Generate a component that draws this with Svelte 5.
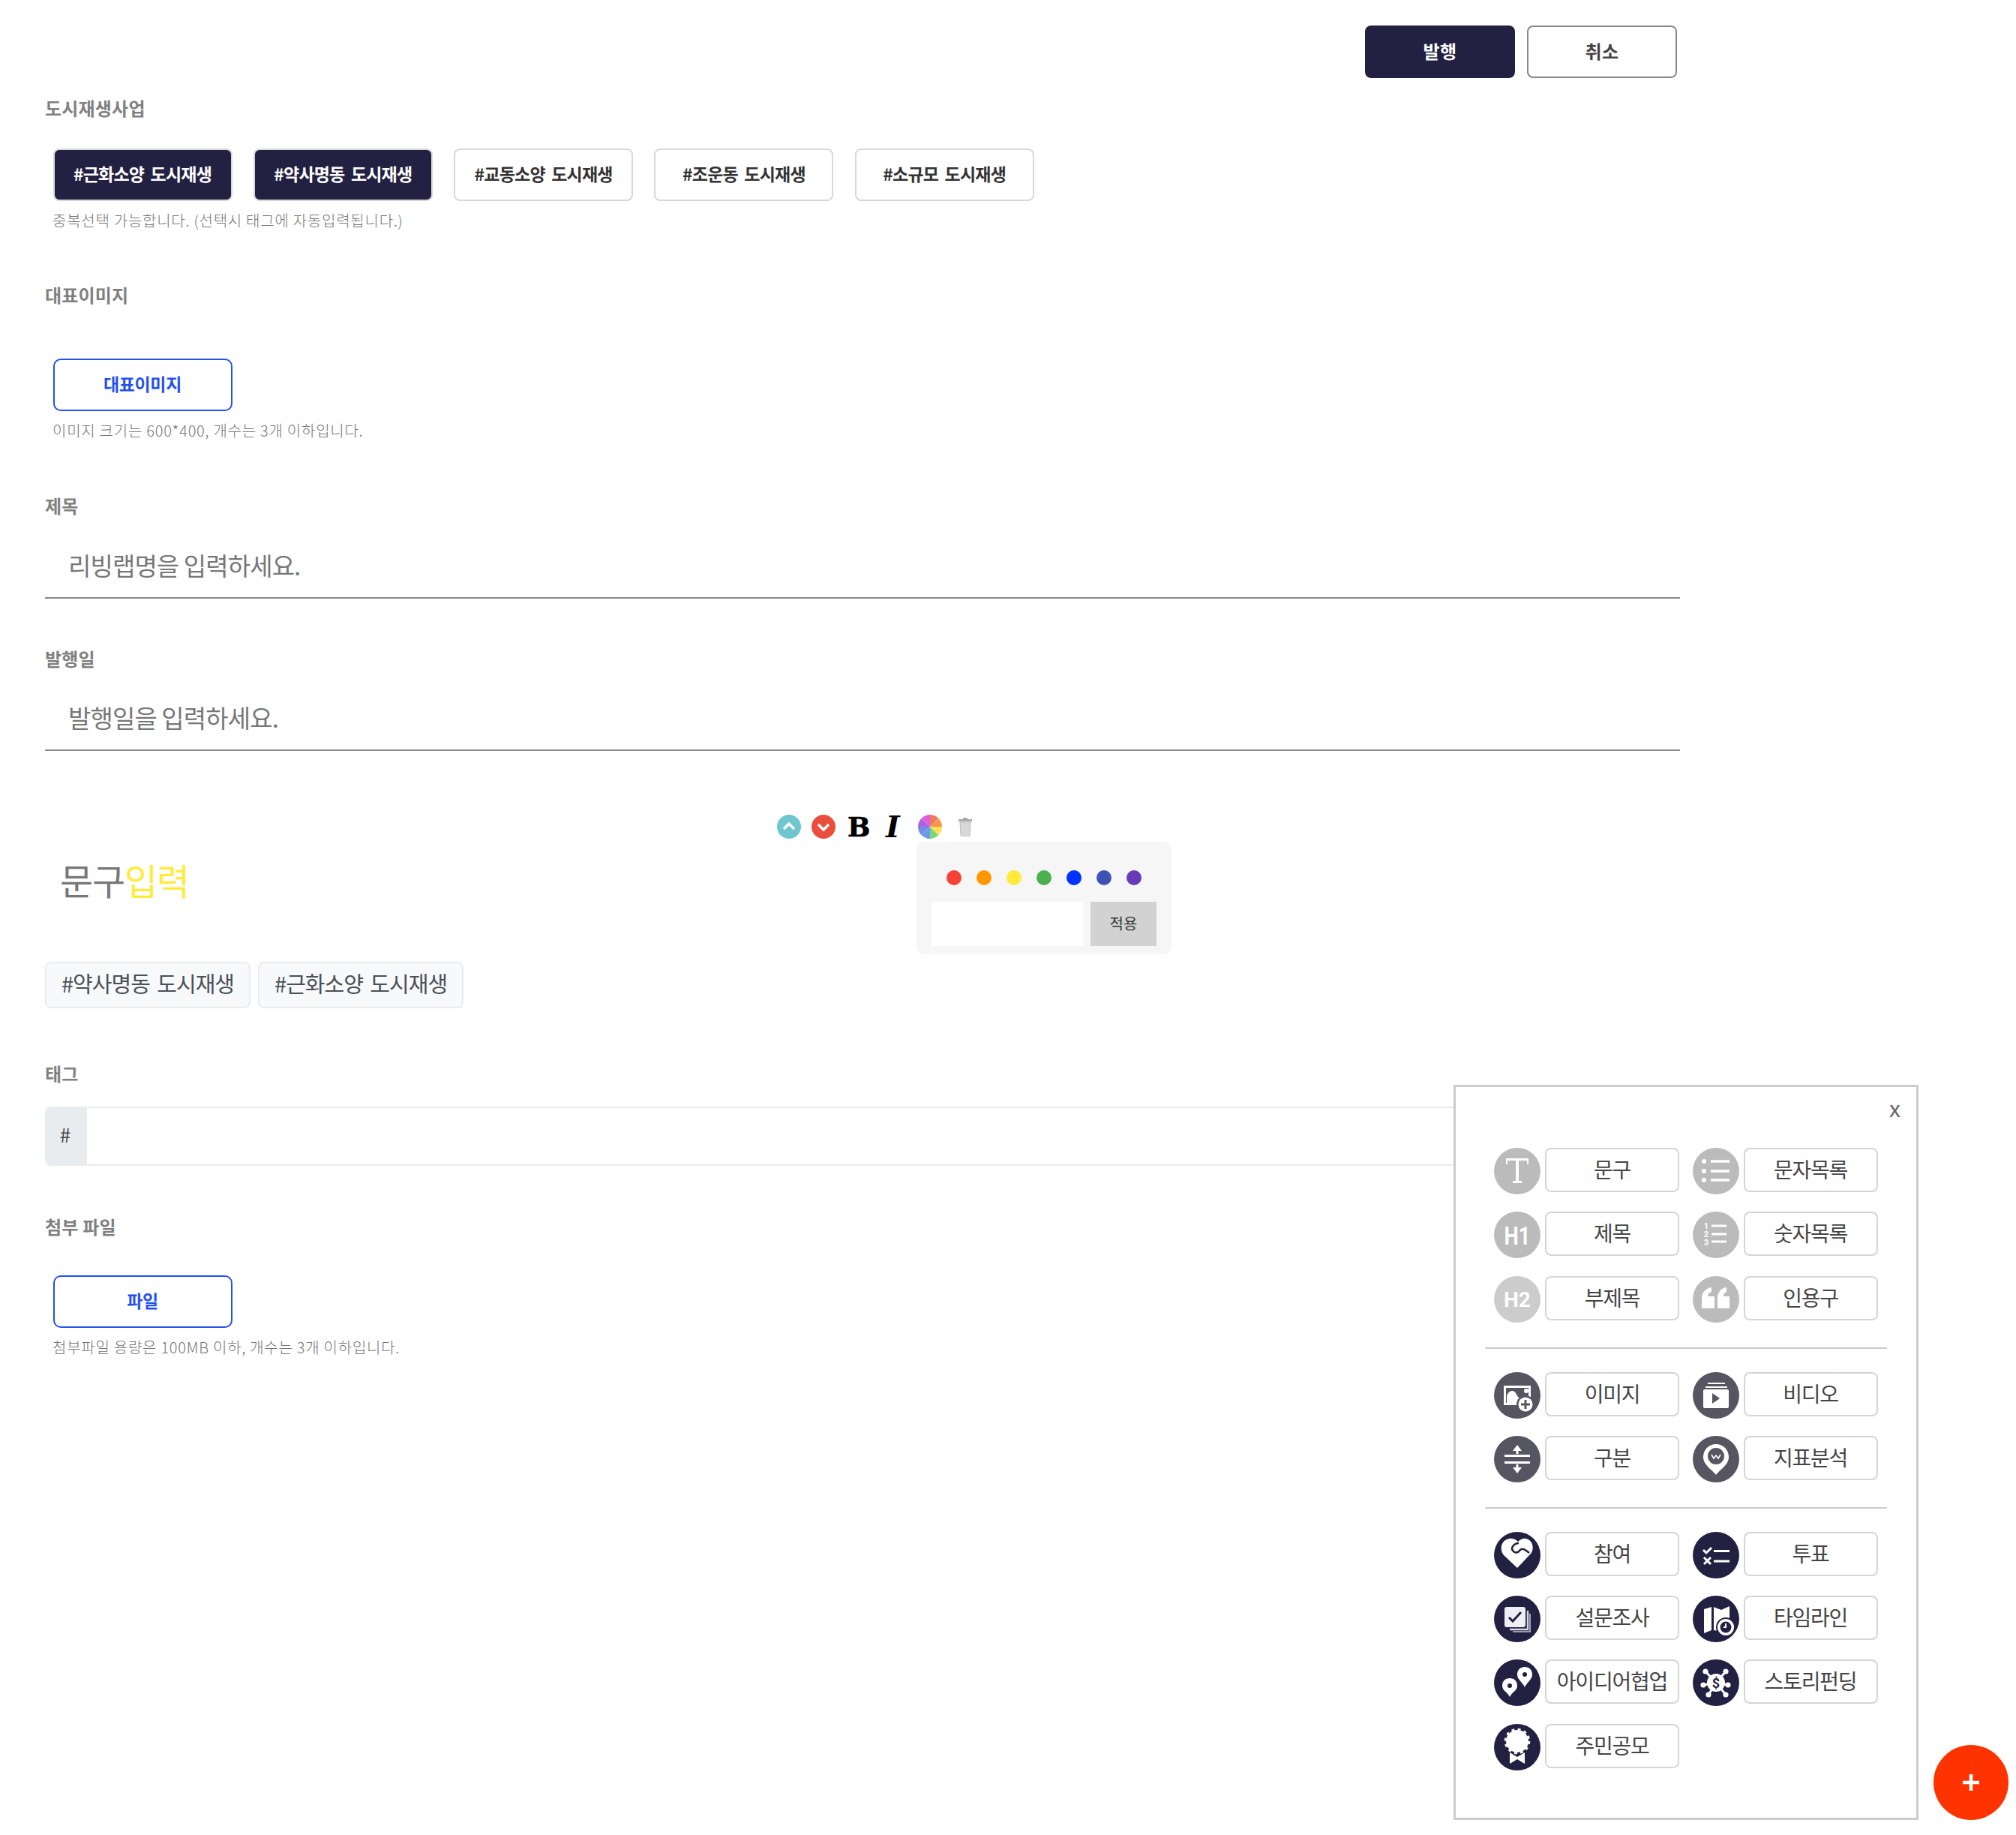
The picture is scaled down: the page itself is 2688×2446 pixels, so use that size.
<script>
  const tagOptions = [
    { label: '#근화소양 도시재생', active: true },
    { label: '#약사명동 도시재생', active: true },
    { label: '#교동소양 도시재생', active: false },
    { label: '#조운동 도시재생', active: false },
    { label: '#소규모 도시재생', active: false }
  ];
  const swatches = ['#f44336', '#ff9800', '#ffeb3b', '#4caf50', '#0033ff', '#3f51b5', '#673ab7'];
  const wheel = ['#ee7a5c', '#f4974e', '#ffdf5a', '#7ed67a', '#6a9bea', '#6f8ee4', '#b061e0', '#e25ce0'];
  const groups = [
    {
      tone: 'light',
      items: [
        { icon: 't', label: '문구' }, { icon: 'ul', label: '문자목록' },
        { icon: 'h1', label: '제목' }, { icon: 'ol', label: '숫자목록' },
        { icon: 'h2', label: '부제목', pale: true }, { icon: 'quote', label: '인용구' }
      ]
    },
    {
      tone: 'mid',
      items: [
        { icon: 'image', label: '이미지' }, { icon: 'video', label: '비디오' },
        { icon: 'split', label: '구분' }, { icon: 'pin', label: '지표분석' }
      ]
    },
    {
      tone: 'dark',
      items: [
        { icon: 'heart', label: '참여' }, { icon: 'vote', label: '투표' },
        { icon: 'survey', label: '설문조사' }, { icon: 'timeline', label: '타임라인' },
        { icon: 'idea', label: '아이디어협업' }, { icon: 'fund', label: '스토리펀딩' },
        { icon: 'award', label: '주민공모' }
      ]
    }
  ];

  function sector(i, n) {
    const r = 16;
    const a0 = (i / n) * Math.PI * 2 - Math.PI / 2;
    const a1 = ((i + 1) / n) * Math.PI * 2 - Math.PI / 2;
    return `M16 16L${16 + r * Math.cos(a0)} ${16 + r * Math.sin(a0)}A${r} ${r} 0 0 1 ${16 + r * Math.cos(a1)} ${16 + r * Math.sin(a1)}Z`;
  }
</script>

{#snippet glyph(name)}
  {#if name === 't'}
    <path d="M16 14h30v8h-2v-5H33v27h4v3H25v-3h4V17H18v5h-2z" fill="#fff" />
  {:else if name === 'ul'}
    <g fill="#fff"><circle cx="15" cy="18" r="3" /><circle cx="15" cy="31" r="3" /><circle cx="15" cy="43" r="3" /></g>
    <g stroke="#fff" stroke-width="3.6"><path d="M24 18h25M24 31h25M24 43h25" /></g>
  {:else if name === 'h1'}
    <text x="31" y="43.5" class="ic-text" font-size="34" font-weight="700" textLength="35" lengthAdjust="spacingAndGlyphs">H1</text>
  {:else if name === 'h2'}
    <text x="31" y="41" class="ic-text" font-size="28" font-weight="700" textLength="36" lengthAdjust="spacingAndGlyphs">H2</text>
  {:else if name === 'ol'}
    <text x="18" y="23" class="ic-text" font-size="11" font-weight="700">1</text>
    <text x="18" y="34" class="ic-text" font-size="11" font-weight="700">2</text>
    <text x="18" y="45" class="ic-text" font-size="11" font-weight="700">3</text>
    <g stroke="#fff" stroke-width="3"><path d="M25 19h20M25 30h20M25 40h20" /></g>
  {:else if name === 'quote'}
    <path d="M12 43V30c0-8 5-14 13-15v6c-3 1-5 3-5 6h9v16zM33 43V30c0-8 4-14 12-15v6c-3 1-4 3-4 6h8v16z" fill="#fff" />
  {:else if name === 'image'}
    <path d="M13 18h36v22h-3V21H16v20h20v3H13z" fill="#fff" />
    <path d="M17 41V32c1-4 4-7 7-7s5 2 6 5l2 3 3 3v5z" fill="#fff" />
    <circle cx="43" cy="25" r="3" fill="#fff" />
    <circle cx="42" cy="43" r="12" fill="#565663" />
    <circle cx="42" cy="43" r="9.5" fill="#fff" />
    <path d="M42 37v12M36 43h12" stroke="#565663" stroke-width="3" />
  {:else if name === 'video'}
    <path d="M20 14h23v2H20zM17 19h29v2H17z" fill="#fff" />
    <rect x="14" y="23" width="34" height="25" rx="2" fill="#fff" />
    <path d="M26 28l10 7-10 7z" fill="#565663" />
  {:else if name === 'split'}
    <g fill="none" stroke="#fff" stroke-width="3">
      <path d="M14 26.5h34M14 35.5h34" />
      <path d="M31 15v9M31 38v9" />
    </g>
    <path d="M25 20l6-8 6 8zM25 42l6 8 6-8z" fill="#fff" />
  {:else if name === 'pin'}
    <path d="M31 11c-9 0-17 7-17 17 0 11 12 17 17 24 5-7 17-13 17-24 0-10-8-17-17-17z" fill="#fff" />
    <circle cx="31" cy="27" r="11" fill="#565663" />
    <path d="M25 25l3 5 3-4 3 4 3-5" fill="none" stroke="#fff" stroke-width="1.6" />
  {:else if name === 'heart'}
    <path d="M31 48L13 31C7 24 9 11 20 9c5-1 9 1 12 4 3-3 7-5 11-4 9 2 11 14 6 20z" fill="#fff" />
    <path d="M33 15c-6 0-11 6-8 10 3 4 7 3 10-1 3-3 7 0 12 4" fill="none" stroke="#232142" stroke-width="2.6" />
  {:else if name === 'vote'}
    <path d="M14 24l4 4 7-7" fill="none" stroke="#fff" stroke-width="3" />
    <path d="M15 34l9 9M24 34l-9 9" stroke="#fff" stroke-width="3" />
    <path d="M28 25.5h21M28 39h21" stroke="#fff" stroke-width="3" />
  {:else if name === 'survey'}
    <path d="M45 20v25H21" fill="none" stroke="#d8d8e4" stroke-width="2.4" />
    <path d="M48 24v24H25" fill="none" stroke="#c4c4d4" stroke-width="1.6" />
    <rect x="14" y="15" width="28" height="27" rx="3" fill="#eeeef4" />
    <path d="M20 29l5 5 11-12" fill="none" stroke="#232142" stroke-width="3" />
  {:else if name === 'timeline'}
    <path d="M15 18l10-3v31l-10 4zM28 15l10 4 11-5v20H36v13l-8-1z" fill="#fff" />
    <circle cx="44" cy="42" r="13" fill="#232142" />
    <circle cx="44" cy="42" r="11" fill="#fff" />
    <circle cx="44" cy="42" r="7.5" fill="#232142" />
    <path d="M44 37v5h-3" fill="none" stroke="#fff" stroke-width="2" />
  {:else if name === 'idea'}
    <path d="M41 10c-6 0-10 4-10 10 0 7 7 10 10 17 3-7 10-10 10-17 0-6-4-10-10-10z" fill="#fff" />
    <circle cx="41" cy="20" r="3" fill="#232142" />
    <path d="M21 25c-6 0-10 4-10 10 0 7 7 8 10 15 3-7 10-8 10-15 0-6-4-10-10-10z" fill="#fff" />
    <circle cx="21" cy="35" r="3" fill="#232142" />
  {:else if name === 'fund'}
    <g stroke="#fff" stroke-width="3">
      <path d="M17 16l14 15M44 16L31 31M14 34l17-3M47 34l-16-3M21 47l10-16M44 47L31 31" />
    </g>
    <g fill="#fff">
      <circle cx="17" cy="16" r="3.6" /><circle cx="44" cy="16" r="3.6" /><circle cx="14" cy="34" r="3.6" />
      <circle cx="47" cy="34" r="3.6" /><circle cx="21" cy="47" r="3.6" /><circle cx="44" cy="47" r="3.6" />
      <circle cx="31" cy="31" r="12" />
    </g>
    <text x="31" y="37.5" class="ic-text dark" font-size="18" font-weight="700">$</text>
  {:else if name === 'award'}
    <circle cx="31" cy="23" r="15" fill="#fff" />
    <circle cx="31" cy="23" r="16" fill="none" stroke="#fff" stroke-width="2.6" stroke-dasharray="4 4.4" />
    <path d="M21 38l10 6 10-6v15l-10-6-10 6z" fill="#fff" />
  {/if}
{/snippet}

<div class="page">
  <div class="form">
    <div class="actions">
      <button class="btn solid">발행</button>
      <button class="btn outline">취소</button>
    </div>

    <section class="field first">
      <h3>도시재생사업</h3>
      <div class="options">
        {#each tagOptions as t}
          <button class="opt" class:active={t.active}>{t.label}</button>
        {/each}
      </div>
      <p class="hint">중복선택 가능합니다. (선택시 태그에 자동입력됩니다.)</p>
    </section>

    <section class="field rep">
      <h3>대표이미지</h3>
      <button class="upload">대표이미지</button>
      <p class="hint">이미지 크기는 600*400, 개수는 3개 이하입니다.</p>
    </section>

    <section class="field title">
      <h3>제목</h3>
      <div class="line-input">리빙랩명을 입력하세요.</div>
    </section>

    <section class="field date">
      <h3>발행일</h3>
      <div class="line-input">발행일을 입력하세요.</div>
    </section>

    <section class="editor">
      <div class="toolbar">
        <svg class="tool" viewBox="0 0 32 32"><circle cx="16" cy="16" r="16" fill="#6fc6cf" /><path d="M9 19l7-7 7 7" fill="none" stroke="#fff" stroke-width="3.4" /></svg>
        <svg class="tool" viewBox="0 0 32 32"><circle cx="16" cy="16" r="16" fill="#ea4f3d" /><path d="M9 13l7 7 7-7" fill="none" stroke="#fff" stroke-width="3.4" /></svg>
        <span class="tool-b">B</span>
        <span class="tool-i">I</span>
        <svg class="tool wheel" viewBox="0 0 32 32">
          {#each wheel as c, i}<path d={sector(i, wheel.length)} fill={c} />{/each}
        </svg>
        <svg class="trash" viewBox="0 0 20 26">
          <path d="M7 1h6v2h6v3H1V3h6z" fill="#aaa" />
          <path d="M3 7h14l-1 17a2 2 0 0 1-2 2H6a2 2 0 0 1-2-2z" fill="#d8d8d8" stroke="#bbb" />
        </svg>
      </div>
      <div class="picker">
        <div class="dots">
          {#each swatches as c}<span class="dot" style="background:{c}"></span>{/each}
        </div>
        <div class="picker-row">
          <div class="picker-input"></div>
          <button class="apply">적용</button>
        </div>
      </div>
      <div class="phrase">문구<span class="yellow">입력</span></div>
      <div class="chips">
        <span class="chip">#약사명동 도시재생</span>
        <span class="chip">#근화소양 도시재생</span>
      </div>
    </section>

    <section class="field tags">
      <h3>태그</h3>
      <div class="tag-input">
        <span class="prefix">#</span>
        <div class="tag-box"></div>
      </div>
    </section>

    <section class="field attach">
      <h3>첨부 파일</h3>
      <button class="upload">파일</button>
      <p class="hint">첨부파일 용량은 100MB 이하, 개수는 3개 이하입니다.</p>
    </section>
  </div>

  <aside class="blocks">
    <span class="close">x</span>
    {#each groups as g, gi}
      {#if gi > 0}<hr />{/if}
      <div class="block-grid">
        {#each g.items as item}
          <div class="block">
            <svg class="block-icon" viewBox="0 0 62 62">
              <circle cx="31" cy="31" r="31" class={g.tone} class:pale={item.pale} />
              {@render glyph(item.icon)}
            </svg>
            <button class="block-btn">{item.label}</button>
          </div>
        {/each}
      </div>
    {/each}
  </aside>

  <button class="fab" aria-label="추가">
    <svg viewBox="0 0 24 24" width="24" height="24"><path d="M12 1v22M1 12h22" stroke="#fff" stroke-width="4.5" /></svg>
  </button>
</div>

<style>
  :global(body) {
    margin: 0;
    background: #fff;
  }
  .page {
    position: relative;
    width: 2688px;
    height: 2446px;
    overflow: hidden;
    font-family: "Noto Sans CJK KR", "Noto Sans", sans-serif;
    color: #333;
  }
  button {
    font-family: inherit;
    cursor: pointer;
  }
  .form {
    width: 2180px;
    margin-left: 60px;
    padding-top: 34px;
  }
  .actions {
    display: flex;
    justify-content: flex-end;
    gap: 16px;
    padding-right: 4px;
  }
  .btn {
    width: 200px;
    height: 70px;
    padding: 0 0 4px;
    border-radius: 8px;
    font-size: 24px;
    font-weight: 700;
    letter-spacing: 0.4px;
  }
  .btn.solid {
    background: #232142;
    border: 2px solid #232142;
    color: #fff;
  }
  .btn.outline {
    background: #fff;
    border: 2px solid #888;
    color: #444;
  }
  h3 {
    margin: 0;
    font-size: 24px;
    line-height: 34px;
    font-weight: 700;
    color: #808080;
    letter-spacing: 0.2px;
  }
  .field.first {
    margin-top: 23px;
  }
  .options {
    display: flex;
    gap: 28.3px;
    margin: 37px 0 0 10.5px;
  }
  .opt {
    width: 239px;
    height: 70px;
    padding: 0 0 5px;
    background: #fff;
    border: 2px solid #d8d8d8;
    border-radius: 8px;
    font-size: 23px;
    font-weight: 700;
    color: #333;
    letter-spacing: -0.8px;
    word-spacing: 4px;
  }
  .opt.active {
    background: #232142;
    color: #fff;
  }
  .hint {
    margin: 11px 0 0 10px;
    font-size: 20px;
    line-height: 30px;
    font-weight: 300;
    color: #777;
    letter-spacing: 0.75px;
  }
  .field.rep {
    margin-top: 67px;
  }
  .upload {
    display: block;
    width: 239px;
    height: 70px;
    margin: 0 0 0 10.5px;
    padding: 0 0 5px;
    background: #fff;
    border: 2px solid #2450f0;
    border-radius: 10px;
    color: #2450f0;
    font-size: 23px;
    font-weight: 700;
    letter-spacing: -0.4px;
  }
  .field.rep .upload {
    margin-top: 68px;
  }
  .field.title {
    margin-top: 68px;
  }
  .line-input {
    height: 88px;
    margin-top: 19px;
    padding: 0 0 0 31px;
    border-bottom: 2px solid #888;
    font-size: 33px;
    line-height: 86px;
    font-weight: 400;
    color: #777;
    letter-spacing: -0.9px;
    box-sizing: border-box;
  }
  .field.date {
    margin-top: 63px;
  }
  .field.date .line-input {
    margin-top: 18px;
  }
  .editor {
    position: relative;
    padding-top: 139px;
  }
  .toolbar {
    position: absolute;
    left: 976px;
    top: 85px;
    display: flex;
    align-items: center;
    height: 32px;
  }
  .tool {
    width: 32px;
    height: 32px;
    margin-right: 14px;
  }
  .tool-b,
  .tool-i {
    font-family: "DejaVu Serif", serif;
    font-size: 36px;
    line-height: 32px;
    color: #000;
    font-weight: 900;
  }
  .tool-b {
    width: 51px;
    padding-left: 2px;
    -webkit-text-stroke: 0.6px #000;
  }
  .tool-i {
    width: 43px;
    font-size: 40px;
    font-style: italic;
  }
  .wheel {
    margin-right: 21px;
  }
  .trash {
    width: 20px;
    height: 26px;
  }
  .picker {
    position: absolute;
    left: 1162px;
    top: 121px;
    width: 340px;
    height: 150px;
    background: #f6f6f6;
    border-radius: 10px;
    box-sizing: border-box;
    padding: 38px 20px 12px;
  }
  .dots {
    display: flex;
    gap: 20px;
    padding-left: 20px;
  }
  .dot {
    width: 20px;
    height: 20px;
    border-radius: 50%;
  }
  .picker-row {
    display: flex;
    gap: 10px;
    margin-top: 22px;
  }
  .picker-input {
    width: 202px;
    height: 59px;
    background: #fff;
  }
  .apply {
    width: 88px;
    height: 59px;
    border: 0;
    padding: 0 0 3px;
    background: #d2d2d2;
    font-size: 20px;
    color: #333;
  }
  .phrase {
    margin-left: 20px;
    font-size: 48px;
    line-height: 64px;
    color: #777;
    letter-spacing: -1.2px;
  }
  .yellow {
    color: #ffeb3b;
  }
  .chips {
    display: flex;
    gap: 10px;
    margin-top: 78px;
  }
  .chip {
    height: 62px;
    box-sizing: border-box;
    padding: 0 20px;
    background: #f8f9fa;
    border: 2px solid #e9ecef;
    border-radius: 8px;
    font-size: 29px;
    line-height: 52px;
    color: #495057;
    letter-spacing: -1px;
    word-spacing: 4px;
  }
  .field.tags {
    margin-top: 70px;
  }
  .tag-input {
    display: flex;
    margin-top: 27px;
    height: 79px;
  }
  .prefix {
    width: 54px;
    background: #e9ecef;
    border-radius: 8px 0 0 8px;
    text-align: center;
    font-size: 26px;
    line-height: 74px;
    color: #444;
  }
  .tag-box {
    flex: 1;
    border: 2px solid #e9ecef;
    border-radius: 0 8px 8px 0;
  }
  .field.attach {
    margin-top: 64px;
  }
  .field.attach .upload {
    margin-top: 48px;
  }
  .blocks {
    position: absolute;
    left: 1938px;
    top: 1446px;
    width: 620px;
    height: 980px;
    box-sizing: border-box;
    border: 3px solid #ccc;
    background: #fff;
    padding: 81px 39px 0;
  }
  .close {
    position: absolute;
    right: 21px;
    top: 5px;
    font-size: 30px;
    color: #666;
  }
  hr {
    margin: 33px 0 31px;
    border: 0;
    height: 2px;
    background: #ccc;
  }
  .block-grid {
    display: grid;
    grid-template-columns: 264.5px 247px;
    row-gap: 23.3px;
    padding-left: 12px;
  }
  .block {
    display: flex;
    align-items: flex-start;
    gap: 6px;
  }
  .block-icon {
    width: 62px;
    height: 62px;
    flex: none;
  }
  .block-icon .light { fill: #bbb; }
  .block-icon .pale { fill: #ccc; }
  .block-icon .mid { fill: #565663; }
  .block-icon .dark { fill: #232142; }
  .ic-text {
    font-family: "Roboto", sans-serif;
    text-anchor: middle;
    fill: #fff;
  }
  .ic-text.dark {
    fill: #232142;
  }
  .block-btn {
    width: 179px;
    height: 59px;
    padding: 0 0 3px;
    background: #fff;
    border: 2px solid #d5d5d5;
    border-radius: 8px;
    font-size: 28px;
    color: #444;
    letter-spacing: -1.2px;
  }
  .fab {
    position: absolute;
    left: 2578px;
    top: 2326px;
    width: 100px;
    height: 100px;
    border: 0;
    border-radius: 50%;
    background: #ff3300;
    display: flex;
    align-items: center;
    justify-content: center;
    padding: 0;
  }
</style>
